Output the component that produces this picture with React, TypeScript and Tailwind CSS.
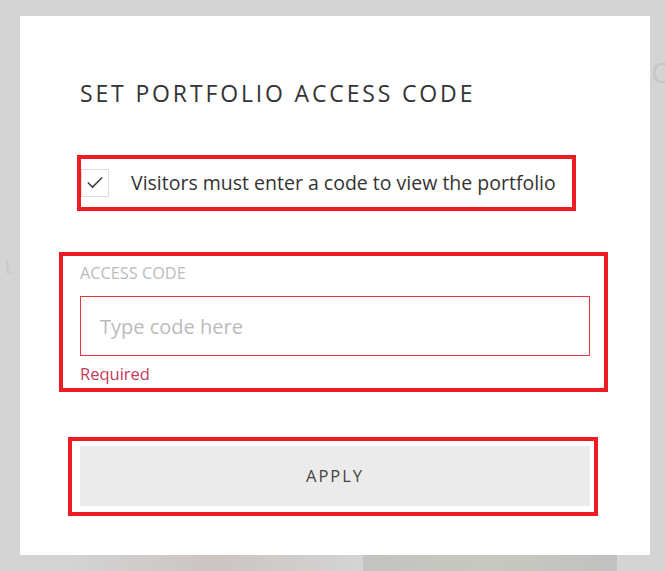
import { Check } from "lucide-react";

const red = "border-4 border-[#ed1c24]";

export default function App() {
  return (
    <div className="relative w-[665px] h-[571px] overflow-hidden bg-[#d4d4d4] font-['Open_Sans',sans-serif]">
      {/* page behind the overlay */}
      <div className="flex flex-col h-full">
        <div className="flex justify-end pt-[56px]">
          <span className="text-[28px] leading-[32px] text-[#c6c6c6] mr-[-8px]">O</span>
        </div>
        <div className="pt-[168px] pl-[5px]">
          <span className="text-[18px] leading-[20px] text-[#c8c8c8]">L</span>
        </div>
        <div className="mt-auto flex h-[16px] pl-[70px] gap-[3px]">
          <div className="w-[290px] bg-gradient-to-r from-[#d3d3d3] via-[#cbc5c2] to-[#d4d4d4]" />
          <div className="w-[254px] bg-gradient-to-r from-[#c3c3c1] via-[#c7c9bf] to-[#c1c1c1]" />
        </div>
      </div>

      {/* modal */}
      <div className="absolute left-[20px] top-[16px] w-[630px] h-[539px] bg-white pl-[60px] pt-[62px]">
        <h2 className="text-[23px] leading-[30px] tracking-[2.85px] text-[#333] font-normal">
          SET PORTFOLIO ACCESS CODE
        </h2>

        <div className={`${red} mt-[47px] ml-[-3px] w-[499px] h-[56px] flex items-center`}>
          <div className="w-[28px] h-[28px] border border-[#dedede] flex items-center justify-center">
            <Check size={20} strokeWidth={2} className="text-[#444]" />
          </div>
          <span className="ml-[22px] text-[19.5px] leading-[24px] text-[#333]">
            Visitors must enter a code to view the portfolio
          </span>
        </div>

        <div className={`${red} mt-[41px] ml-[-21px] w-[549px] h-[140px] pl-[17px] pt-[7px]`}>
          <label className="block text-[16.3px] leading-[20px] text-[#bbb]">ACCESS CODE</label>
          <input
            className="mt-[13px] block w-[510px] h-[60px] border border-[#e8323c] pl-[19px] text-[20px] text-[#333] placeholder:text-[#bbb] outline-none"
            placeholder="Type code here"
          />
          <p className="mt-[7px] text-[16.5px] leading-[22px] text-[#c73a5b]">Required</p>
        </div>

        <div className={`${red} mt-[45px] ml-[-12px] w-[530px] h-[79px] pl-[8px] pt-[5px]`}>
          <button className="w-[510px] h-[60px] bg-[#ebebeb] text-[16.5px] tracking-[0.12em] text-[#444]">
            APPLY
          </button>
        </div>
      </div>
    </div>
  );
}
